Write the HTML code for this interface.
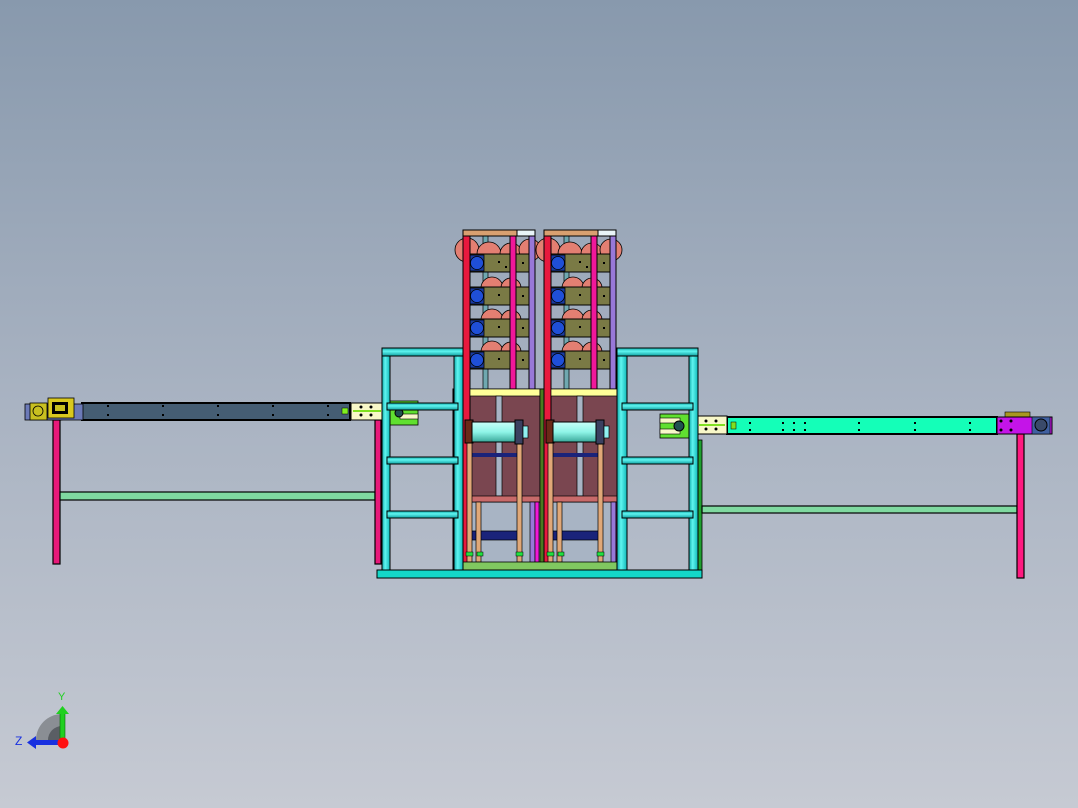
<!DOCTYPE html>
<html><head><meta charset="utf-8"><style>
html,body{margin:0;padding:0;}
body{width:1078px;height:808px;overflow:hidden;background:linear-gradient(#8899ad,#a9b3c2 50%,#c6cad3);}
svg{display:block}
</style></head><body>
<svg width="1078" height="808" viewBox="0 0 1078 808" xmlns="http://www.w3.org/2000/svg" font-family="Liberation Sans, sans-serif">
<defs>
<linearGradient id="cv" x1="0" x2="1"><stop offset="0" stop-color="#0fa9a9"/><stop offset=".4" stop-color="#5ff5f0"/><stop offset="1" stop-color="#10b8b8"/></linearGradient>
<linearGradient id="ch" x1="0" y1="0" x2="0" y2="1"><stop offset="0" stop-color="#0fa9a9"/><stop offset=".4" stop-color="#5ff5f0"/><stop offset="1" stop-color="#10a0a0"/></linearGradient>
<linearGradient id="cyl" x1="0" y1="0" x2="0" y2="1"><stop offset="0" stop-color="#c8fff8"/><stop offset=".5" stop-color="#8ff5e8"/><stop offset="1" stop-color="#3aa89a"/></linearGradient>
<g id="tower">
 <rect x="483" y="236" width="5" height="154" fill="#6fa8b0" stroke="#000" stroke-width=".7"/>
 <g fill="#e37f72" stroke="#000" stroke-width=".8">
  <circle cx="467" cy="250" r="12"/><circle cx="489" cy="254" r="12"/><circle cx="511" cy="254" r="11"/><circle cx="530" cy="250" r="11"/>
  <circle cx="492" cy="288" r="11"/><circle cx="511" cy="288" r="10"/>
  <circle cx="492" cy="320" r="11"/><circle cx="511" cy="320" r="10"/>
  <circle cx="492" cy="352" r="11"/><circle cx="511" cy="352" r="10"/>
 </g>
 <g fill="#7a7a45" stroke="#000" stroke-width="1">
  <rect x="469" y="254" width="60" height="18"/><rect x="469" y="287" width="60" height="18"/>
  <rect x="469" y="319" width="60" height="18"/><rect x="469" y="351" width="60" height="18"/>
 </g>
 <g fill="#1f4fd8" stroke="#000" stroke-width=".8">
  <rect x="470" y="255" width="14" height="16" fill="#1a3ca0"/><circle cx="477" cy="263" r="6.5"/>
  <rect x="470" y="288" width="14" height="16" fill="#1a3ca0"/><circle cx="477" cy="296" r="6.5"/>
  <rect x="470" y="320" width="14" height="16" fill="#1a3ca0"/><circle cx="477" cy="328" r="6.5"/>
  <rect x="470" y="352" width="14" height="16" fill="#1a3ca0"/><circle cx="477" cy="360" r="6.5"/>
 </g>
 <g fill="#000"><rect x="498" y="261" width="2" height="2"/><rect x="505" y="266" width="2" height="2"/><rect x="498" y="294" width="2" height="2"/><rect x="498" y="326" width="2" height="2"/><rect x="498" y="358" width="2" height="2"/><rect x="522" y="262" width="2" height="2"/><rect x="522" y="295" width="2" height="2"/><rect x="522" y="327" width="2" height="2"/><rect x="522" y="359" width="2" height="2"/></g>
 <rect x="463" y="236" width="7" height="330" fill="#e8193e" stroke="#000" stroke-width="1"/>
 <rect x="510" y="236" width="6" height="153" fill="#f0189a" stroke="#000" stroke-width="1"/>
 <rect x="529" y="236" width="6" height="153" fill="#9878d8" stroke="#000" stroke-width="1"/>
 <rect x="463" y="230" width="54" height="6" fill="#d9a070" stroke="#000" stroke-width="1"/>
 <rect x="517" y="230" width="18" height="6" fill="#e8f4f8" stroke="#000" stroke-width="1"/>
 <rect x="470" y="389" width="70" height="113" fill="#7a4650" stroke="#000" stroke-width="1"/>
 <rect x="470" y="389" width="70" height="7" fill="#ffff99" stroke="#000" stroke-width=".7"/>
 <rect x="496" y="396" width="6" height="100" fill="#a8b4c4" stroke="#000" stroke-width=".7"/>
 <rect x="470" y="496" width="70" height="6" fill="#c86a6a" stroke="#000" stroke-width=".7"/>
 <rect x="470" y="453" width="48" height="4" fill="#1a237a"/>
 <rect x="470" y="531" width="48" height="9" fill="#1a237a" stroke="#000" stroke-width=".7"/>
 <rect x="530" y="502" width="5" height="62" fill="#9878d8" stroke="#000" stroke-width=".7"/>
 <rect x="535" y="502" width="4" height="62" fill="#f018d8" stroke="#000" stroke-width=".7"/>
 <rect x="540" y="389" width="4" height="177" fill="#4a7a20" stroke="#000" stroke-width=".7"/>
 <rect x="467" y="442" width="5" height="120" fill="#e0a878" stroke="#000" stroke-width=".7"/>
 <rect x="476" y="502" width="5" height="60" fill="#e0a878" stroke="#000" stroke-width=".7"/>
 <rect x="517" y="442" width="5" height="120" fill="#e0a878" stroke="#000" stroke-width=".7"/>
 <rect x="466" y="552" width="7" height="4" fill="#20e040" stroke="#000" stroke-width=".5"/>
 <rect x="477" y="552" width="6" height="4" fill="#20e040" stroke="#000" stroke-width=".5"/>
 <rect x="516" y="552" width="7" height="4" fill="#20e040" stroke="#000" stroke-width=".5"/>
 <rect x="465" y="420" width="8" height="23" fill="#6a2a18" stroke="#000" stroke-width="1"/>
 <rect x="472" y="422" width="44" height="20" fill="url(#cyl)" stroke="#000" stroke-width="1"/>
 <rect x="515" y="420" width="8" height="24" fill="#3a4060" stroke="#000" stroke-width="1"/>
 <rect x="523" y="426" width="5" height="12" fill="#8ff0f0" stroke="#000" stroke-width=".7"/>
</g>
</defs>

<rect x="53" y="420" width="7" height="144" fill="#e8197a" stroke="#000" stroke-width="1.2"/>
<rect x="60" y="492" width="315" height="8" fill="#7fd9a0" stroke="#000" stroke-width="1.2"/>
<rect x="375" y="420" width="6" height="144" fill="#e8197a" stroke="#000" stroke-width="1.2"/>
<rect x="25" y="404" width="37" height="16" fill="#6c7ab8" stroke="#000" stroke-width=".8"/>
<rect x="82" y="403" width="268" height="17" fill="#455d73" stroke="#000" stroke-width="2"/>
<rect x="47" y="404" width="36" height="16" fill="#6c7ab8" stroke="#000" stroke-width=".8"/>
<rect x="30" y="403" width="17" height="17" fill="#c8c020" stroke="#000" stroke-width=".8"/>
<circle cx="38" cy="411" r="5" fill="none" stroke="#000" stroke-width=".8"/>
<rect x="48" y="398" width="26" height="20" fill="#d8c820" stroke="#000" stroke-width=".8"/>
<rect x="52" y="402" width="16" height="12" fill="#000"/><rect x="55" y="405" width="10" height="6" fill="#c8c020"/>
<g fill="#000"><rect x="107" y="405" width="2" height="2"/><rect x="107" y="414" width="2" height="2"/><rect x="162" y="405" width="2" height="2"/><rect x="162" y="414" width="2" height="2"/><rect x="217" y="405" width="2" height="2"/><rect x="217" y="414" width="2" height="2"/><rect x="272" y="405" width="2" height="2"/><rect x="272" y="414" width="2" height="2"/><rect x="327" y="405" width="2" height="2"/><rect x="327" y="414" width="2" height="2"/></g>
<rect x="342" y="408" width="6" height="6" fill="#80f020" stroke="#000" stroke-width=".5"/>
<rect x="351" y="403" width="32" height="17" fill="#f8f8c8" stroke="#000" stroke-width="1"/>
<rect x="353" y="410" width="28" height="2" fill="#80e020"/>
<g fill="#000"><circle cx="361" cy="407" r="1.5"/><circle cx="371" cy="407" r="1.5"/><circle cx="361" cy="415" r="1.5"/><circle cx="371" cy="415" r="1.5"/></g>
<rect x="390" y="401" width="28" height="24" fill="#60e030" stroke="#000" stroke-width=".8"/>
<rect x="400" y="414" width="18" height="5" fill="#f8f8c8" stroke="#000" stroke-width=".6"/>
<circle cx="399" cy="413" r="4" fill="#205050" stroke="#000"/>

<rect x="698" y="440" width="4" height="130" fill="#20a030" stroke="#000" stroke-width=".8"/>
<rect x="702" y="506" width="315" height="7" fill="#7fd9a0" stroke="#000" stroke-width="1.2"/>
<rect x="1017" y="434" width="7" height="144" fill="#ff1a80" stroke="#000" stroke-width="1.2"/>
<rect x="727" y="417" width="270" height="17" fill="#14ffb8" stroke="#000" stroke-width="2"/>
<g fill="#000"><rect x="749" y="422" width="2" height="2"/><rect x="749" y="429" width="2" height="2"/><rect x="782" y="422" width="2" height="2"/><rect x="782" y="429" width="2" height="2"/><rect x="793" y="422" width="2" height="2"/><rect x="793" y="429" width="2" height="2"/><rect x="804" y="422" width="2" height="2"/><rect x="804" y="429" width="2" height="2"/><rect x="858" y="422" width="2" height="2"/><rect x="858" y="429" width="2" height="2"/><rect x="914" y="422" width="2" height="2"/><rect x="914" y="429" width="2" height="2"/><rect x="969" y="422" width="2" height="2"/><rect x="969" y="429" width="2" height="2"/></g>
<rect x="731" y="422" width="5" height="7" fill="#80e020" stroke="#000" stroke-width=".5"/>
<rect x="697" y="416" width="30" height="18" fill="#f8f8c8" stroke="#000" stroke-width="1"/>
<rect x="699" y="424" width="26" height="2" fill="#80e020"/>
<g fill="#000"><circle cx="706" cy="421" r="1.5"/><circle cx="716" cy="421" r="1.5"/><circle cx="706" cy="429" r="1.5"/><circle cx="716" cy="429" r="1.5"/></g>
<rect x="660" y="414" width="30" height="24" fill="#60e030" stroke="#000" stroke-width=".8"/>
<rect x="660" y="418" width="20" height="5" fill="#f8f8c8" stroke="#000" stroke-width=".6"/>
<rect x="660" y="429" width="20" height="5" fill="#f8f8c8" stroke="#000" stroke-width=".6"/>
<circle cx="679" cy="426" r="5" fill="#205050" stroke="#000"/>
<rect x="1005" y="412" width="25" height="5" fill="#a89820" stroke="#000" stroke-width=".6"/>
<rect x="997" y="417" width="55" height="17" fill="#c414e8" stroke="#000" stroke-width="1"/>
<g fill="#000"><circle cx="1001" cy="421" r="1.5"/><circle cx="1011" cy="421" r="1.5"/><circle cx="1001" cy="430" r="1.5"/><circle cx="1011" cy="430" r="1.5"/></g>
<rect x="1032" y="417" width="18" height="17" fill="#4060a0" stroke="#000" stroke-width=".6"/>
<circle cx="1041" cy="425" r="6" fill="#3a4a6a" stroke="#000"/>

<rect x="453" y="389" width="174" height="181" fill="#a8b4c4" stroke="#000" stroke-width="1"/>
<use href="#tower"/>
<use href="#tower" transform="translate(81,0)"/>
<rect x="463" y="562" width="154" height="8" fill="#80c860" stroke="#000" stroke-width=".8"/>

<g stroke="#000" stroke-width="1">
<rect x="382" y="350" width="8" height="220" fill="url(#cv)"/>
<rect x="454" y="350" width="9" height="220" fill="url(#cv)"/>
<rect x="617" y="350" width="10" height="220" fill="url(#cv)"/>
<rect x="689" y="350" width="9" height="220" fill="url(#cv)"/>
<rect x="382" y="348" width="81" height="8" fill="url(#ch)"/>
<rect x="387" y="403" width="71" height="7" fill="url(#ch)"/>
<rect x="387" y="457" width="71" height="7" fill="url(#ch)"/>
<rect x="387" y="511" width="71" height="7" fill="url(#ch)"/>
<rect x="617" y="348" width="81" height="8" fill="url(#ch)"/>
<rect x="622" y="403" width="71" height="7" fill="url(#ch)"/>
<rect x="622" y="457" width="71" height="7" fill="url(#ch)"/>
<rect x="622" y="511" width="71" height="7" fill="url(#ch)"/>
<rect x="377" y="570" width="325" height="8" fill="#14d8c8"/>
</g>

<path d="M36 740 A26 26 0 0 1 62 714 L62 740 Z" fill="#8a8e94"/>
<path d="M48 740 A14 14 0 0 1 62 726 L62 740 Z" fill="#5a5e64"/>
<rect x="60" y="712" width="5" height="28" fill="#20d020" stroke="#0a6a0a" stroke-width=".6"/>
<path d="M56 714 L62.5 706 L69 714 Z" fill="#20d020"/>
<rect x="34" y="740" width="28" height="5" fill="#1830e0"/>
<path d="M36 736 L27 742.5 L36 749 Z" fill="#1830e0"/>
<circle cx="63" cy="743" r="5.5" fill="#ff1010"/>
<text x="58" y="700" font-size="11" fill="#20d020">Y</text>
<text x="15" y="745" font-size="12" fill="#1830e0">Z</text>
</svg>
</body></html>
